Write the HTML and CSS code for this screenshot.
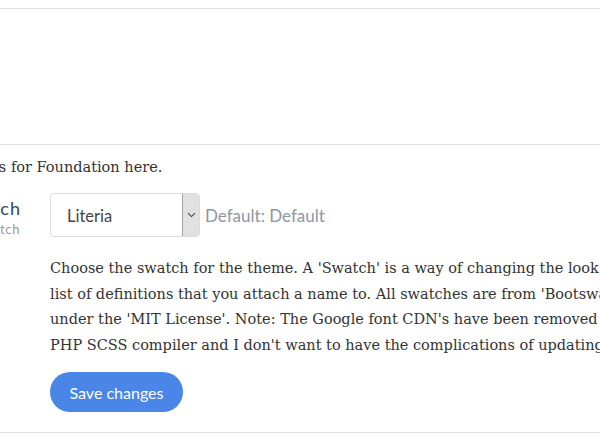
FILE: index.html
```html
<!DOCTYPE html>
<html>
<head>
<meta charset="utf-8">
<link rel="stylesheet" href="styles.css">
</head>
<body>
<div class="page">
  <div class="heading-block"></div>
  <div class="settings">
    <p class="intro">Configure the settings for Foundation here.</p>
    <div class="setting">
      <div class="label-col">
        <div class="label-text">
          <label class="label">Swatch</label>
          <span class="shortname">swatch</span>
        </div>
      </div>
      <div class="control-col">
        <div class="control-row">
          <div class="select">
            <span class="select-value">Literia</span>
            <span class="select-arrow">
              <svg width="9" height="6" viewBox="0 0 9 6"><path d="M1 1.2 L4.5 4.6 L8 1.2" fill="none" stroke="#444" stroke-width="1.1"/></svg>
            </span>
          </div>
          <span class="default">Default: Default</span>
        </div>
        <p class="desc">Choose the swatch for the theme. A 'Swatch' is a way of changing the look and feel of Bootstrap using a<br>list of definitions that you attach a name to. All swatches are from 'Bootswatch.com' by Thomas Park and are licensed<br>under the 'MIT License'. Note: The Google font CDN's have been removed because of the<br>PHP SCSS compiler and I don't want to have the complications of updating the code.</p>
        <button class="btn">Save changes</button>
      </div>
    </div>
  </div>
</div>
</body>
</html>
```
FILE: styles.css
```css
html, body {
  margin: 0;
  padding: 0;
  background: #fff;
  overflow: hidden;
  width: 600px;
  height: 440px;
}
body {
  padding-top: 8px;
  box-sizing: border-box;
}
.page {
  margin-left: -250px;
  width: 1200px;
  border-top: 1px solid #dedede;
}
.heading-block {
  height: 135px;
}
.settings {
  border-top: 1px solid #dedede;
  border-bottom: 1px solid #dedede;
  padding-top: 10px;
  padding-bottom: 20px;
}
.intro {
  margin: 0 0 13px 0;
  padding-left: 92px;
  font-family: "DejaVu Serif", serif;
  font-size: 14.5px;
  line-height: 25px;
  color: #333;
}
.setting {
  display: flex;
}
.label-col {
  width: 300px;
  display: flex;
  justify-content: flex-end;
  padding-right: 30px;
  box-sizing: border-box;
  overflow: hidden;
}
.label-text {
  display: flex;
  flex-direction: column;
  align-items: flex-end;
  padding-top: 4px;
  font-family: "Lato", sans-serif;
}
.label {
  font-size: 18px;
  letter-spacing: 1px;
  color: #2c4a63;
  line-height: 22px;
  margin-right: -1px;
}
.shortname {
  font-size: 13px;
  letter-spacing: 0.6px;
  color: #9a9a9a;
  line-height: 18px;
  margin-top: 1px;
}
.control-col {
  display: flex;
  flex-direction: column;
  align-items: flex-start;
}
.control-row {
  display: flex;
  align-items: center;
  gap: 5px;
}
.select {
  display: flex;
  width: 150px;
  height: 44px;
  border: 1px solid #dcdcdc;
  border-radius: 4px;
  box-sizing: border-box;
  overflow: hidden;
}
.select-value {
  flex: 1;
  display: flex;
  align-items: center;
  padding-left: 16px;
  padding-top: 1px;
  font-family: "Lato", sans-serif;
  font-size: 16.5px;
  color: #444;
}
.select-arrow {
  width: 16px;
  background: #e1e1e1;
  border-left: 1px solid #a5a5a5;
  display: flex;
  align-items: center;
  justify-content: center;
  border-radius: 0 3px 3px 0;
}
.default {
  font-family: "Lato", sans-serif;
  font-size: 17px;
  color: #8f96a3;
}
.desc {
  margin: 19px 0 14px 0;
  font-family: "DejaVu Serif", serif;
  font-size: 14.5px;
  line-height: 25.5px;
  color: #333;
  white-space: nowrap;
}
.btn {
  height: 40px;
  padding: 0 19.5px;
  border: none;
  border-radius: 20px;
  background: #4a86e8;
  color: #fff;
  font-family: "Lato", sans-serif;
  font-size: 16px;
}
```
